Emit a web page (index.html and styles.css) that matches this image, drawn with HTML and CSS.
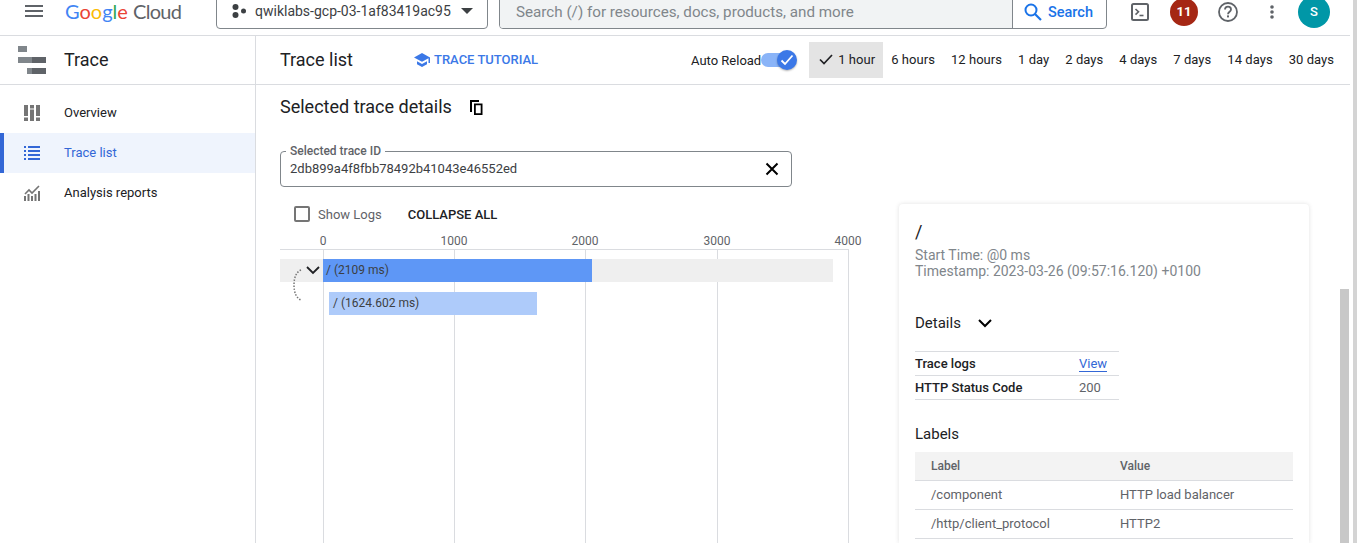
FILE: index.html
```html
<!DOCTYPE html>
<html lang="en">
<head>
    <meta charset="UTF-8">
    <title>Trace list</title>
    <link rel="stylesheet" href="styles.css">
</head>
<body>
    <header class="topbar">
        <svg class="menu-icon" width="18" height="12" viewBox="0 0 18 12"><path d="M0 0h18v2H0zM0 5h18v2H0zM0 10h18v2H0z" fill="#5f6368"/></svg>
        <div class="logo"><span class="c-blue">G</span><span class="c-red">o</span><span class="c-yellow">o</span><span class="c-blue">g</span><span class="c-green">l</span><span class="c-red">e</span> <span class="logo-cloud">Cloud</span></div>
        <div class="project-picker">
            <svg width="14" height="14" viewBox="0 0 14 14"><circle cx="3.500" cy="3" r="3" fill="#3c4043"/><circle cx="11.500" cy="7" r="2.500" fill="#3c4043"/><circle cx="3.500" cy="11" r="3" fill="#3c4043"/></svg>
            <span class="project-name">qwiklabs-gcp-03-1af83419ac95</span>
            <svg width="12" height="6" viewBox="0 0 12 6"><path d="M0 0h12L6 6z" fill="#3c4043"/></svg>
        </div>
        <div class="search">
            <div class="search-input">Search (/) for resources, docs, products, and more</div>
            <div class="search-btn">
                <svg width="18" height="18" viewBox="0 0 18 18"><circle cx="7" cy="7" r="5.500" fill="none" stroke="#1a73e8" stroke-width="2"/><path d="M11 11l6 6" stroke="#1a73e8" stroke-width="2.200"/></svg>
                <span>Search</span>
            </div>
        </div>
        <div class="top-actions">
            <svg class="shell-icon" width="18" height="18" viewBox="0 0 18 18"><rect x="1" y="1" width="16" height="16" rx="1.500" fill="none" stroke="#5f6368" stroke-width="2"/><path d="M4.500 6l3 2.800-3 2.800" fill="none" stroke="#5f6368" stroke-width="1.600"/><path d="M8.500 12.500h4" stroke="#5f6368" stroke-width="1.600"/></svg>
            <div class="badge">11</div>
            <svg class="help-icon" width="20" height="20" viewBox="0 0 20 20"><circle cx="10" cy="10" r="9" fill="none" stroke="#5f6368" stroke-width="1.800"/><path d="M7 7.600c0-1.800 1.400-3 3-3s3 1.200 3 2.800c0 2.300-3 2.300-3 4.800" fill="none" stroke="#5f6368" stroke-width="1.800"/><rect x="9" y="13.400" width="2" height="2" fill="#5f6368"/></svg>
            <svg class="dots-icon" width="4" height="14" viewBox="0 0 4 14"><circle cx="2" cy="2" r="1.800" fill="#5f6368"/><circle cx="2" cy="7" r="1.800" fill="#5f6368"/><circle cx="2" cy="12" r="1.800" fill="#5f6368"/></svg>
            <div class="avatar">S</div>
        </div>
    </header>

    <div class="layout">
        <aside class="sidebar">
            <div class="side-head">
                <svg width="28" height="28" viewBox="0 0 28 28"><path d="M0 0h9v6H0z" fill="#80868b"/><path d="M0 11h14v6H0z" fill="#80868b"/><path d="M14 11h14v6H14z" fill="#5f6368"/><path d="M9 22h5v6H9z" fill="#80868b"/><path d="M14 22h14v6H14z" fill="#5f6368"/></svg>
                <span class="side-title">Trace</span>
            </div>
            <nav class="side-nav">
                <a class="nav-item">
                    <svg width="16" height="16" viewBox="0 0 16 16"><path d="M0 0h4v11H0zM0 12.500h4V16H0zM6 0h4v3.500H6zM6 4.500h4V16H6zM12 0h4v11h-4zM12 12.500h4V16h-4z" fill="#757575"/></svg>
                    <span>Overview</span>
                </a>
                <a class="nav-item active">
                    <svg width="16" height="14" viewBox="0 0 16 14"><path d="M0 0h2v2H0zM4 0h12v2H4zM0 4h2v2H0zM4 4h12v2H4zM0 8h2v2H0zM4 8h12v2H4zM0 12h2v2H0zM4 12h12v2H4z" fill="#3367d6"/></svg>
                    <span>Trace list</span>
                </a>
                <a class="nav-item">
                    <svg width="16" height="16" viewBox="0 0 16 16"><path d="M1 9l4-4 3 3 7-7" fill="none" stroke="#757575" stroke-width="1.600"/><path d="M0 11h2v5H0zM3.500 9h2v7h-2zM7 11h2v5H7zM10.500 9h2v7h-2zM14 6h2v10h-2z" fill="#757575"/></svg>
                    <span>Analysis reports</span>
                </a>
            </nav>
        </aside>

        <main class="content">
            <div class="toolbar">
                <h1 class="page-title">Trace list</h1>
                <a class="tutorial">
                    <svg width="16" height="14" viewBox="0 0 16 14"><path d="M8 0L0 4.400l8 4.400 6.500-3.600V10H16V4.400z" fill="#3b78e7"/><path d="M3 8.300v3L8 14l5-2.700v-3L8 11z" fill="#3b78e7"/></svg>
                    TRACE TUTORIAL
                </a>
                <div class="spacer"></div>
                <span class="reload-label">Auto Reload</span>
                <div class="toggle">
                    <div class="toggle-track"></div>
                    <div class="toggle-knob">
                        <svg width="14" height="12" viewBox="0 0 14 12"><path d="M1.500 6.500l3.500 3.500 7.500-8.500" fill="none" stroke="#fff" stroke-width="1.800"/></svg>
                    </div>
                </div>
                <div class="ranges">
                    <div class="range selected">
                        <svg width="14" height="11" viewBox="0 0 14 11"><path d="M1 5.500l4 4 8-8.500" fill="none" stroke="#202124" stroke-width="1.700"/></svg>
                        1 hour
                    </div>
                    <div class="range">6 hours</div>
                    <div class="range">12 hours</div>
                    <div class="range">1 day</div>
                    <div class="range">2 days</div>
                    <div class="range">4 days</div>
                    <div class="range">7 days</div>
                    <div class="range">14 days</div>
                    <div class="range">30 days</div>
                </div>
            </div>

            <section class="details">
                <div class="details-head">
                    <h2 class="details-title">Selected trace details</h2>
                    <svg width="13" height="15" viewBox="0 0 13 15"><path d="M0 0h9v2H2v10H0z" fill="#000"/><path d="M4 3.500h8.500V15H4zM5.800 5.300v7.900h4.900V5.300z" fill="#000" fill-rule="evenodd"/></svg>
                </div>

                <div class="trace-field">
                    <span class="field-legend">Selected trace ID</span>
                    <span class="field-value">2db899a4f8fbb78492b41043e46552ed</span>
                    <svg width="14" height="14" viewBox="0 0 14 14"><path d="M1.500 1.500l11 11M12.500 1.500l-11 11" stroke="#000" stroke-width="2"/></svg>
                </div>

                <div class="columns">
                    <div class="chart-col">
                        <div class="chart-controls">
                            <span class="checkbox"></span>
                            <span class="show-logs">Show Logs</span>
                            <span class="collapse">COLLAPSE ALL</span>
                        </div>
                        <div class="chart">
                            <span class="tick" style="left: 43px">0</span>
                            <span class="tick" style="left: 174px">1000</span>
                            <span class="tick" style="left: 305px">2000</span>
                            <span class="tick" style="left: 437px">3000</span>
                            <span class="tick" style="left: 568px">4000</span>
                            <div class="axis-line"></div>
                            <div class="grid-line" style="left: 43px"></div>
                            <div class="grid-line" style="left: 174px"></div>
                            <div class="grid-line" style="left: 305px"></div>
                            <div class="grid-line" style="left: 437px"></div>
                            <div class="grid-line" style="left: 568px"></div>
                            <div class="row-bg"></div>
                            <div class="bar bar-root">/ (2109 ms)</div>
                            <div class="bar bar-child">/ (1624.602 ms)</div>
                            <svg class="row-chevron" width="14" height="9" viewBox="0 0 14 9"><path d="M1 1l6 6 6-6" fill="none" stroke="#202124" stroke-width="1.800"/></svg>
                            <svg class="row-link" width="10" height="32" viewBox="0 0 10 32"><path d="M8 1C3 3 1 9 1 16s2 13 7 15" fill="none" stroke="#757575" stroke-width="1.500" stroke-dasharray="1.500 1.500"/></svg>
                        </div>
                    </div>

                    <div class="card">
                        <div class="span-name">/</div>
                        <div class="span-meta">Start Time: @0 ms<br>Timestamp: 2023-03-26 (09:57:16.120) +0100</div>
                        <div class="card-section details-toggle">
                            <span>Details</span>
                            <svg width="14" height="9" viewBox="0 0 14 9"><path d="M1 1l6 6 6-6" fill="none" stroke="#000" stroke-width="2"/></svg>
                        </div>
                        <div class="kv-table">
                            <div class="kv-row"><span class="kv-key">Trace logs</span><a class="kv-link">View</a></div>
                            <div class="kv-row"><span class="kv-key">HTTP Status Code</span><span class="kv-val">200</span></div>
                        </div>
                        <div class="card-section labels-title">Labels</div>
                        <div class="label-table">
                            <div class="label-row label-head"><span class="label-cell">Label</span><span>Value</span></div>
                            <div class="label-row"><span class="label-cell">/component</span><span>HTTP load balancer</span></div>
                            <div class="label-row"><span class="label-cell">/http/client_protocol</span><span>HTTP2</span></div>
                        </div>
                    </div>
                </div>
            </section>
        </main>
    </div>

    <div class="inner-scroll"></div>
    <div class="outer-scroll"></div>
</body>
</html>
```

FILE: styles.css
```css
* {
    box-sizing: border-box;
}
html, body {
    margin: 0;
    height: 543px;
    overflow: hidden;
}
body {
    background: #fff;
    font-family: Roboto, "Liberation Sans", sans-serif;
    font-size: 13px;
    color: #202124;
    position: relative;
}

/* top bar, scrolled a few pixels off the page */
.topbar {
    height: 36px;
    margin-right: 8px;
    display: flex;
    align-items: flex-start;
    border-bottom: 1px solid #dadce0;
    padding-left: 25px;
    overflow: hidden;
}
.menu-icon {
    margin-top: 5px;
}
.logo {
    margin: -1px 0 0 22px;
    width: 151px;
    font-family: Lato, sans-serif;
    font-size: 20px;
    line-height: 24px;
    white-space: nowrap;
}
.c-blue { color: #4285f4; }
.c-red { color: #ea4335; }
.c-yellow { color: #fbbc05; }
.c-green { color: #34a853; }
.logo-cloud {
    color: #5f6368;
    letter-spacing: -0.7px;
}
.project-picker {
    width: 272px;
    height: 36px;
    margin-top: -7px;
    display: flex;
    align-items: center;
    padding: 0 14px 0 15px;
    border: 1px solid #80868b;
    border-radius: 4px;
    color: #3c4043;
    font-size: 14px;
}
.project-name {
    margin-left: 9px;
    flex: 1;
}
.search {
    width: 608px;
    height: 36px;
    margin: -7px 0 0 11px;
    display: flex;
    border: 1px solid #80868b;
    border-radius: 4px;
    overflow: hidden;
}
.search-input {
    flex: 1;
    display: flex;
    align-items: center;
    padding: 2px 0 0 16px;
    background: #f1f3f4;
    color: #80868b;
    font-size: 15.2px;
    border-right: 1px solid #80868b;
}
.search-btn {
    width: 93px;
    display: flex;
    align-items: center;
    gap: 6px;
    padding: 2px 0 0 11px;
    color: #1a73e8;
    font-size: 14.5px;
    font-weight: 500;
}
.top-actions {
    display: flex;
    align-items: center;
    height: 23px;
}
.shell-icon {
    margin-left: 24px;
}
.badge {
    width: 28px;
    height: 28px;
    margin-left: 21px;
    border-radius: 50%;
    background: #a52714;
    color: #fff;
    font-size: 13px;
    font-weight: 700;
    display: flex;
    align-items: center;
    justify-content: center;
}
.help-icon {
    margin-left: 20px;
}
.dots-icon {
    margin-left: 32px;
}
.avatar {
    width: 32px;
    height: 32px;
    margin-left: 24px;
    border-radius: 50%;
    background: #0097a7;
    color: #fff;
    font-size: 13px;
    font-weight: 500;
    display: flex;
    align-items: center;
    justify-content: center;
}

.layout {
    display: flex;
    height: 507px;
}

/* left navigation */
.sidebar {
    width: 256px;
    flex-shrink: 0;
    border-right: 1px solid #dadce0;
}
.side-head {
    height: 49px;
    display: flex;
    align-items: center;
    padding-left: 18px;
    border-bottom: 1px solid #dadce0;
}
.side-title {
    margin-left: 18px;
    padding-bottom: 2px;
    font-size: 18px;
}
.side-nav {
    padding-top: 8px;
}
.nav-item {
    height: 40px;
    display: flex;
    align-items: center;
    padding-left: 24px;
    gap: 24px;
    font-size: 13px;
    color: #202124;
}
.nav-item span {
    padding-bottom: 2px;
}
.nav-item svg {
    width: 16px;
}
.nav-item.active {
    background: #eff4fd;
    border-left: 4px solid #3367d6;
    padding-left: 20px;
    color: #3367d6;
}

/* page toolbar */
.content {
    flex: 1;
    min-width: 0;
}
.toolbar {
    height: 49px;
    margin-right: 8px;
    display: flex;
    align-items: center;
    padding: 0 8px 1px 24px;
    border-bottom: 1px solid #dadce0;
}
.page-title {
    margin: 0;
    font-size: 18px;
    font-weight: 400;
    width: 134px;
}
.tutorial {
    display: flex;
    align-items: center;
    gap: 4px;
    color: #3b78e7;
    font-size: 13px;
    font-weight: 500;
}
.spacer {
    flex: 1;
}
.reload-label {
    font-size: 13px;
    padding-top: 2px;
}
.toggle {
    position: relative;
    width: 36px;
    height: 20px;
    margin-right: 12px;
}
.toggle-track {
    position: absolute;
    left: 0;
    top: 3px;
    width: 28px;
    height: 14px;
    border-radius: 7px;
    background: #8ab4f8;
}
.toggle-knob {
    position: absolute;
    left: 16px;
    top: 0;
    width: 20px;
    height: 20px;
    border-radius: 50%;
    background: #3b78e7;
    display: flex;
    align-items: center;
    justify-content: center;
    box-shadow: 0 1px 2px rgba(0, 0, 0, 0.3);
}
.ranges {
    display: flex;
    align-items: center;
}
.range {
    height: 36px;
    display: flex;
    align-items: center;
    padding: 0 8px;
    font-size: 13px;
    letter-spacing: 0.05px;
    white-space: nowrap;
}
.range.selected {
    background: #e4e4e4;
    padding-left: 10px;
    gap: 5px;
}

/* details */
.details {
    padding: 10px 0 0 24px;
}
.details-head {
    display: flex;
    align-items: center;
    gap: 18px;
    height: 24px;
}
.details-title {
    margin: 0 0 2px;
    font-size: 18px;
    font-weight: 400;
}
.trace-field {
    position: relative;
    width: 512px;
    height: 36px;
    margin-top: 32px;
    display: flex;
    align-items: center;
    justify-content: space-between;
    padding: 0 12px 0 9px;
    border: 1px solid #80868b;
    border-radius: 4px;
}
.field-legend {
    position: absolute;
    left: 5px;
    top: -8px;
    padding: 0 4px;
    background: #fff;
    font-size: 12px;
    line-height: 14px;
    font-weight: 500;
    color: #5f6368;
}
.field-value {
    padding-bottom: 2px;
    font-size: 13px;
    color: #3c4043;
}
.columns {
    display: flex;
    margin-top: 17px;
}
.chart-col {
    width: 619px;
    flex-shrink: 0;
}
.chart-controls {
    height: 20px;
    display: flex;
    align-items: center;
    padding-left: 14px;
}
.checkbox {
    width: 16px;
    height: 16px;
    border: 2px solid #757575;
    border-radius: 2px;
}
.show-logs {
    margin-left: 8px;
    font-size: 13px;
    color: #5f6368;
}
.collapse {
    margin-left: 26px;
    font-size: 13px;
    font-weight: 500;
    color: #202124;
}

/* waterfall is a free canvas, ticks and bars sit at their time values */
.chart {
    position: relative;
    height: 311px;
    margin-top: 8px;
}
.tick {
    position: absolute;
    top: 2px;
    transform: translateX(-50%);
    font-size: 12px;
    line-height: 14px;
    color: #5f6368;
}
.axis-line {
    position: absolute;
    left: 0;
    top: 17px;
    width: 569px;
    height: 1px;
    background: #dadce0;
}
.grid-line {
    position: absolute;
    top: 17px;
    bottom: 0;
    width: 1px;
    background: #dadce0;
}
.row-bg {
    position: absolute;
    left: 0;
    top: 27px;
    width: 553px;
    height: 23px;
    background: #efefef;
}
.bar {
    position: absolute;
    height: 23px;
    line-height: 23px;
    font-size: 12px;
    color: #3c4043;
}
.bar-root {
    left: 43px;
    top: 27px;
    width: 269px;
    padding-left: 3px;
    background: #5e97f6;
}
.bar-child {
    left: 49px;
    top: 60px;
    width: 208px;
    padding-left: 4px;
    background: #aecbfa;
}
.row-chevron {
    position: absolute;
    left: 26px;
    top: 34px;
}
.row-link {
    position: absolute;
    left: 13px;
    top: 37px;
}

/* span card */
.card {
    width: 410px;
    height: 339px;
    padding: 16px;
    border-radius: 4px 4px 0 0;
    box-shadow: 0 0 4px rgba(60, 64, 67, 0.16);
}
.span-name {
    font-size: 18px;
    line-height: 24px;
}
.span-meta {
    margin-top: 3px;
    font-size: 14px;
    line-height: 16px;
    color: #80868b;
}
.card-section {
    font-size: 15px;
    line-height: 24px;
}
.details-toggle {
    margin-top: 32px;
    display: flex;
    align-items: center;
    gap: 17px;
}
.kv-table {
    width: 204px;
    margin-top: 16px;
    border-top: 1px solid #dadce0;
}
.kv-row {
    height: 24px;
    display: flex;
    align-items: center;
    border-bottom: 1px solid #dadce0;
    font-size: 13px;
}
.kv-key {
    width: 164px;
    font-weight: 500;
}
.kv-link {
    color: #3367d6;
    border-bottom: 1px solid #3367d6;
    line-height: 15px;
}
.kv-val {
    color: #5f6368;
}
.labels-title {
    margin-top: 22px;
}
.label-table {
    width: 378px;
    margin-top: 6px;
}
.label-row {
    height: 29px;
    display: flex;
    align-items: center;
    border-bottom: 1px solid #dadce0;
    font-size: 13px;
    color: #5f6368;
}
.label-row span {
    padding-bottom: 2px;
}
.label-head {
    background: #f3f3f3;
    font-size: 12px;
    font-weight: 500;
}
.label-head span {
    padding-bottom: 0;
}
.label-cell {
    width: 205px;
    padding-left: 16px;
    flex-shrink: 0;
}

/* scrollbars lying over the page */
.inner-scroll {
    position: absolute;
    left: 1340px;
    top: 289px;
    width: 9px;
    height: 254px;
    background: #c8c8c8;
}
.outer-scroll {
    position: absolute;
    left: 1353px;
    top: 0;
    width: 4px;
    height: 543px;
    background: #d4d4d4;
}
```
